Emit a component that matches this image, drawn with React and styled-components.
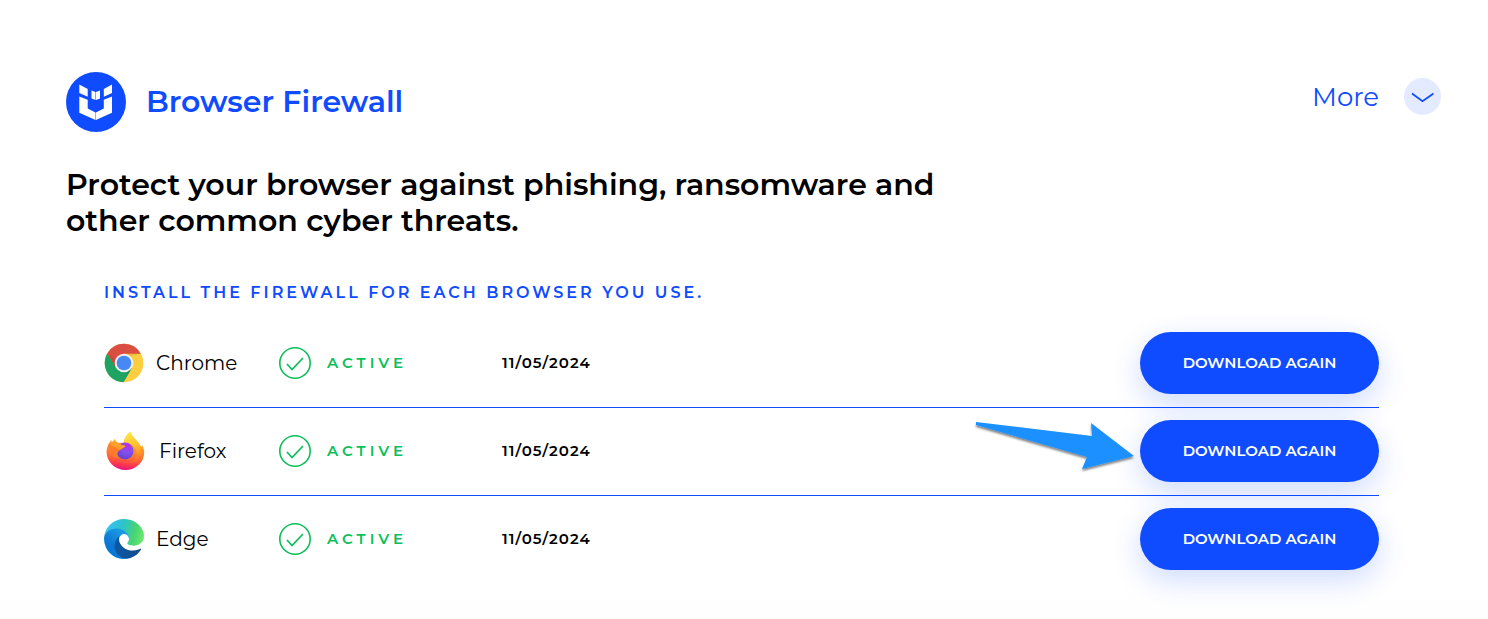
import React from 'react';
import styled, { createGlobalStyle } from 'styled-components';

const GlobalStyle = createGlobalStyle`
  *,
  *::before,
  *::after {
    box-sizing: border-box;
  }

  body {
    margin: 0;
    background: #fff;
    color: #000;
    font-family: Montserrat, Inter, 'Open Sans', sans-serif;
  }
`;

const Page = styled.main`
  display: flex;
  flex-direction: column;
  min-height: 100vh;
  padding: 72px 47px 40px 66px;
  background: linear-gradient(to top, #fcfdfc 0, #fff 32px);
`;

const Header = styled.header`
  display: flex;
  align-items: flex-start;
  justify-content: space-between;
`;

const Brand = styled.div`
  display: flex;
  align-items: center;
  gap: 20px;
`;

const Title = styled.h1`
  margin: 0;
  color: #0f4bff;
  font-size: 30px;
  font-weight: 600;
  line-height: 36px;
`;

const MoreButton = styled.button`
  display: flex;
  align-items: center;
  gap: 25px;
  margin-top: 6px;
  padding: 0;
  border: none;
  background: none;
  color: #0f4bff;
  font-family: inherit;
  font-size: 26px;
  font-weight: 400;
  line-height: 36px;
  cursor: pointer;
`;

const Tagline = styled.h2`
  max-width: 900px;
  margin: 35px 0 0;
  font-size: 30px;
  font-weight: 600;
  line-height: 36px;
`;

const Browsers = styled.section`
  margin: 44px 62px 0 38px;
`;

const Hint = styled.h3`
  margin: 0 0 17px;
  color: #0f4bff;
  font-size: 16px;
  font-weight: 600;
  letter-spacing: 3px;
  line-height: 20px;
  text-transform: uppercase;
`;

const Table = styled.table`
  width: 100%;
  border-collapse: separate;
  border-spacing: 0;
  table-layout: fixed;
`;

const Row = styled.tr`
  &:not(:last-child) > * {
    border-bottom: 1px solid #0f4bff;
  }
`;

const Cell = styled.td`
  width: ${({ $width }) => $width || 'auto'};
  padding: 12px 0 13px;
  text-align: left;
  vertical-align: middle;
`;

const Label = styled.div`
  display: flex;
  align-items: center;
  gap: ${({ $gap }) => $gap}px;
`;

const Name = styled.span`
  font-size: 20px;
  font-weight: 400;
  line-height: 24px;
`;

const Status = styled.span`
  color: #0abf5b;
  font-size: 15px;
  font-weight: 600;
  letter-spacing: 4px;
  line-height: 20px;
  text-transform: uppercase;
`;

const InstalledOn = styled.time`
  font-size: 15px;
  font-weight: 600;
  letter-spacing: 1px;
  line-height: 20px;
`;

const DownloadButton = styled.button`
  display: block;
  width: 239px;
  height: 62px;
  margin-left: auto;
  border: none;
  border-radius: 31px;
  background: #0f4bff;
  box-shadow: 0 10px 30px rgba(15, 75, 255, 0.2);
  color: #fff;
  font-family: inherit;
  font-size: 15px;
  font-weight: 600;
  line-height: 20px;
  text-transform: uppercase;
  cursor: pointer;
`;

const Action = styled.div`
  position: relative;
`;

const Pointer = styled.svg`
  position: absolute;
  top: 0;
  right: 244px;
  pointer-events: none;
`;

function ShieldLogo() {
  return (
    <svg width="60" height="60" viewBox="0 0 60 60" aria-hidden="true">
      <circle cx="30" cy="30" r="30" fill="#0f4bff" />
      <g fill="#fff">
        <path d="M13.300 12.500 21.700 17v7.700L13.300 21z" />
        <path d="M46 12.500 37.800 17v7.700L46 21z" />
        <path d="M13.300 24.500l8.400 3.300v8.700l7.800 4V48L13.300 40.700z" />
        <path d="M46 24.500l-8.200 3.300v8.700l-7.900 4V48L46 40.700z" />
        <path d="M25.500 18.500l4 1.500v8l-4-1.500z" />
        <path d="M34 18.500L30 20v8l4-1.500z" />
      </g>
    </svg>
  );
}

function ChevronIcon() {
  return (
    <svg width="37" height="37" viewBox="0 0 37 37" aria-hidden="true">
      <circle cx="18.500" cy="18.500" r="18.500" fill="#e4eaff" />
      <path d="M8 15.500l10.500 7.800L29.500 15.500" fill="none" stroke="#0f4bff" strokeWidth="1.700" />
    </svg>
  );
}

function ChromeIcon() {
  return (
    <svg width="40" height="40" viewBox="0 0 40 40" aria-hidden="true">
      <circle cx="20" cy="20" r="19.300" fill="#ffcd40" />
      <path d="M3.300 10.300A19.300 19.300 0 0 0 19.500 39.300L28 25 12 24z" fill="#1da362" />
      <path d="M3.300 10.300A19.300 19.300 0 0 1 36.800 10.700H20L11.500 24z" fill="#db4f43" />
      <path d="M20 10.700h16.800l-14 3.500zM28 25l-8.500 14.300L24.500 27zM3.300 10.300L11.500 24.500 13 17z" fill="#000" opacity=".08" />
      <circle cx="20" cy="20" r="9.300" fill="#f1f1f1" />
      <circle cx="20" cy="20" r="7.300" fill="#4688f4" />
    </svg>
  );
}

function FirefoxIcon() {
  return (
    <svg width="43" height="40" viewBox="-1 0 43 40" aria-hidden="true">
      <defs>
        <linearGradient id="fox-body" x1=".65" y1="0" x2=".5" y2="1">
          <stop offset=".05" stopColor="#ffe84a" />
          <stop offset=".35" stopColor="#ffa02f" />
          <stop offset=".7" stopColor="#ff6a33" />
          <stop offset=".88" stopColor="#fb3450" />
          <stop offset="1" stopColor="#e8117f" />
        </linearGradient>
        <linearGradient id="fox-tail" x1=".3" y1="0" x2=".6" y2="1">
          <stop offset="0" stopColor="#ffe847" />
          <stop offset=".5" stopColor="#ffbd2f" />
          <stop offset="1" stopColor="#ff980e" stopOpacity="0" />
        </linearGradient>
        <radialGradient id="fox-globe" cx=".65" cy=".2" r=".9">
          <stop offset="0" stopColor="#b833e1" />
          <stop offset=".45" stopColor="#8450f0" />
          <stop offset="1" stopColor="#5b3fc8" />
        </radialGradient>
      </defs>
      <path
        d="M25.500 .8c1 4 4.500 6.700 7.500 10.200 2 2.500 2.800 3.800 3.200 5.500l.8-2.500c1.800 3 2.200 5 2.200 7.500 0 10-8.500 17.500-18.700 17.500S1.500 31 1.500 20.500C1.500 16 4 12 6 9l1 3 3-4.500c.3 2 1.200 3.200 2.500 4.300h6.200C19 7 22 3 25.500 .8z"
        fill="url(#fox-body)"
      />
      <path d="M25.500 .8c-4 2.700-6.500 7-6.500 11 8-.5 13 5 12.500 12-.2 4-3 7-7 8.500C33 31 37 25 36 18 34 9.500 27 7.500 25.500 .8z" fill="url(#fox-tail)" />
      <circle cx="20" cy="20" r="8.500" fill="url(#fox-globe)" />
      <path d="M3.500 14c3-4 10-3 13 0 2 .6 3.500.3 4 1-1.200 2.200-4.500 2.500-5.500 4-3 1.500-3 5-2 8C8 26 4.500 20 3.500 14z" fill="#ff7a2a" />
      <path d="M6 10.500c3-.5 8 1 10.500 3.500 2 .6 3.500.3 4 1-1.200 2.200-4.500 2.500-5.500 4-1.500-1.500-5.500-3.500-9.500-4z" fill="#ffa02b" />
    </svg>
  );
}

function EdgeIcon() {
  return (
    <svg width="40" height="40" viewBox="0 0 256 256" aria-hidden="true">
      <defs>
        <linearGradient id="edge-navy" x1="63" y1="177" x2="241" y2="177" gradientUnits="userSpaceOnUse">
          <stop offset="0" stopColor="#0c59a4" />
          <stop offset="1" stopColor="#114a8b" />
        </linearGradient>
        <linearGradient id="edge-blue" x1="150" y1="100" x2="45" y2="240" gradientUnits="userSpaceOnUse">
          <stop offset="0" stopColor="#1b9de2" />
          <stop offset=".6" stopColor="#0f78d4" />
          <stop offset="1" stopColor="#0078d4" />
        </linearGradient>
        <linearGradient id="edge-green" x1="20" y1="65" x2="250" y2="125" gradientUnits="userSpaceOnUse">
          <stop offset="0" stopColor="#35c1f1" />
          <stop offset=".4" stopColor="#2cc3c9" />
          <stop offset=".75" stopColor="#4bd472" />
          <stop offset="1" stopColor="#66eb6e" />
        </linearGradient>
      </defs>
      <path
        d="M231 190.500c-3.400 1.800-6.900 3.400-10.500 4.700a101.900 101.900 0 0 1-35.900 6.400c-47.300 0-88.500-32.500-88.500-74.300a31.500 31.500 0 0 1 16.400-27.300c-42.800 1.800-53.800 46.400-53.800 72.500 0 73.900 68.100 81.400 82.800 81.400 7.900 0 19.800-2.300 27-4.600l1.300-.4a128.300 128.300 0 0 0 66.600-52.800 4 4 0 0 0-5.400-5.600z"
        fill="url(#edge-navy)"
      />
      <path
        d="M105.700 241.400a79.200 79.200 0 0 1-22.700-21.300 80.700 80.700 0 0 1 29.500-120c3.200-1.500 8.500-4.100 15.600-4a32.400 32.400 0 0 1 25.700 13 31.900 31.900 0 0 1 6.300 18.700c0-.2 24.500-79.600-80-79.600-43.900 0-80 41.700-80 78.200a130.200 130.200 0 0 0 12.100 56 128 128 0 0 0 156.400 67 75.500 75.500 0 0 1-62.800-8z"
        fill="url(#edge-blue)"
      />
      <path
        d="M152.300 148.900c-.9 1-3.400 2.500-3.400 5.600 0 2.600 1.700 5.200 4.800 7.300 14.300 10 41.400 8.600 41.500 8.600a59.600 59.600 0 0 0 30.300-8.300 61.400 61.400 0 0 0 30.400-52.900c.3-22.400-8-37.300-11.300-43.900C223.500 23.900 177.700 0 128 0A128 128 0 0 0 0 126.200c.5-36.500 36.800-66 80-66 3.500 0 23.500.3 42 10 16.300 8.600 24.900 18.900 30.800 29.200 6.200 10.700 7.300 24.100 7.300 29.500 0 5.300-2.700 13.300-7.800 20z"
        fill="url(#edge-green)"
      />
    </svg>
  );
}

function CheckIcon() {
  return (
    <svg width="32" height="32" viewBox="0 0 32 32" fill="none" stroke="#0abf5b" aria-hidden="true">
      <circle cx="16" cy="16" r="15.200" strokeWidth="1.600" />
      <path d="M8 17l5 5.500L24 11" strokeWidth="1.700" />
    </svg>
  );
}

function PointerArrow() {
  return (
    <Pointer width="164" height="56" viewBox="0 0 164 56" aria-hidden="true">
      <defs>
        <filter id="arrow-shadow" x="-5%" y="-10%" width="110%" height="130%">
          <feDropShadow dx="0" dy="2" stdDeviation="1" floodColor="#000" floodOpacity=".5" />
        </filter>
      </defs>
      <path d="M5 2l116 14-1-13 43 33-52 13 5-12L5 5z" fill="#1e90ff" filter="url(#arrow-shadow)" />
    </Pointer>
  );
}

const browsers = [
  { name: 'Chrome', Icon: ChromeIcon, installedOn: '11/05/2024' },
  { name: 'Firefox', Icon: FirefoxIcon, installedOn: '11/05/2024', highlighted: true },
  { name: 'Edge', Icon: EdgeIcon, installedOn: '11/05/2024' },
];

function BrowserRow({ name, Icon, installedOn, highlighted }) {
  return (
    <Row>
      <Cell as="th" scope="row" $width="175px">
        <Label $gap={12}>
          <Icon />
          <Name>{name}</Name>
        </Label>
      </Cell>
      <Cell $width="223px">
        <Label $gap={16}>
          <CheckIcon />
          <Status>Active</Status>
        </Label>
      </Cell>
      <Cell>
        <InstalledOn>{installedOn}</InstalledOn>
      </Cell>
      <Cell $width="239px">
        <Action>
          {highlighted && <PointerArrow />}
          <DownloadButton type="button">Download again</DownloadButton>
        </Action>
      </Cell>
    </Row>
  );
}

function App() {
  return (
    <>
      <GlobalStyle />
      <Page>
        <Header>
          <Brand>
            <ShieldLogo />
            <Title>Browser Firewall</Title>
          </Brand>
          <MoreButton type="button">
            More
            <ChevronIcon />
          </MoreButton>
        </Header>
        <Tagline>
          Protect your browser against phishing, ransomware and other common cyber threats.
        </Tagline>
        <Browsers>
          <Hint>Install the firewall for each browser you use.</Hint>
          <Table>
            <tbody>
              {browsers.map((browser) => (
                <BrowserRow key={browser.name} {...browser} />
              ))}
            </tbody>
          </Table>
        </Browsers>
      </Page>
    </>
  );
}

export default App;
